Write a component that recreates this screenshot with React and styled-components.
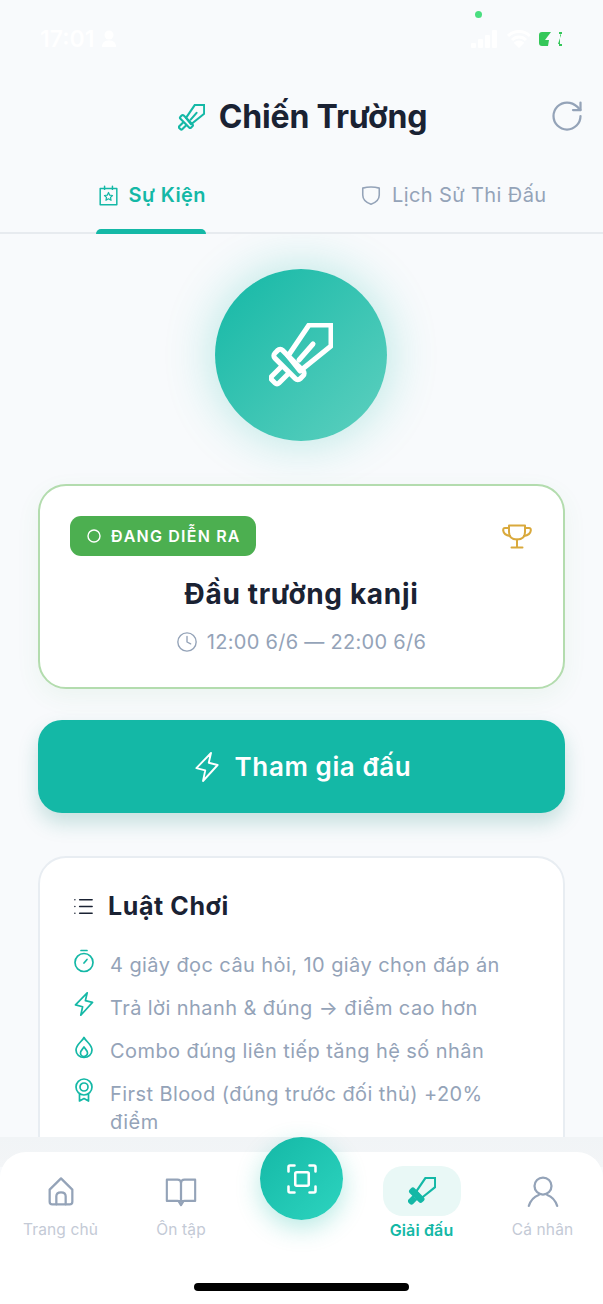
import React from "react";
import styled, { createGlobalStyle } from "styled-components";
import { Clock, List, RotateCw } from "lucide-react";

const Global = createGlobalStyle`
  html, body { margin: 0; padding: 0; background: #f8fafc; }
  * { box-sizing: border-box; }
  body { font-family: Inter, "Noto Sans", sans-serif; }
`;

const Phone = styled.div`
  width: 603px; height: 1304px; display: flex; flex-direction: column;
  background: #f8fafc; overflow: hidden; position: relative;
`;
const StatusBar = styled.div`
  height: 76px; flex: none; display: flex; justify-content: space-between;
  align-items: flex-end; padding: 0 40px 24px 40px; position: relative; color: #fff;
`;
const StatusTime = styled.div`
  display: flex; align-items: center; gap: 7px; font-size: 23px; font-weight: 600; line-height: 26px;
`;
const StatusIcons = styled.div` display: flex; align-items: center; gap: 8px; height: 26px; `;
const CameraDot = styled.span`
  position: absolute; top: 11px; left: 475px; width: 7px; height: 7px;
  border-radius: 50%; background: #4ade80;
`;
const Header = styled.header`
  height: 82px; flex: none; display: flex; align-items: center; justify-content: center;
  gap: 14px; position: relative; padding: 0 0 0 2px;
`;
const HeaderMark = styled.span` display: flex; color: #14b8a6; `;
const Title = styled.h1`
  margin: 0; font-size: 32px; line-height: 40px; font-weight: 700; color: #1a2233; letter-spacing: -0.15px;
`;
const Refresh = styled.span`
  position: absolute; right: 18px; top: 22px; display: flex; color: #94a3b8;
`;
const Tabs = styled.nav`
  flex: none; height: 76px; display: flex; border-bottom: 2px solid #e7ebef;
`;
const TabCell = styled.div` flex: 1; display: flex; justify-content: center; `;
const Tab = styled.div`
  display: flex; align-items: center; gap: 10px; height: 76px; padding: 0 0 2px 2px; position: relative;
  color: ${p => (p.$active ? "#14b8a6" : "#94a3b8")};
  font-size: 20px; font-weight: ${p => (p.$active ? 600 : 400)};
  letter-spacing: 0.4px; margin-bottom: -2px;
  ${p => p.$active && `
    &::after { content: ""; position: absolute; left: 0; right: 0; bottom: 0; height: 5px;
      background: #14b8a6; border-radius: 5px 5px 0 0; }
  `}
`;
const Content = styled.main`
  flex: none; height: 904px; overflow: hidden; padding: 35px 38px 0 38px;
  display: flex; flex-direction: column; align-items: stretch;
`;
const Hero = styled.div`
  width: 172px; height: 172px; border-radius: 50%; align-self: center; flex: none;
  margin-left: -1px; display: flex; align-items: center; justify-content: center;
  color: #fff;
  background: linear-gradient(135deg, #14b8a6, #5ed0bf);
  box-shadow: 0 0 50px rgba(20, 184, 166, 0.3);
`;
const EventCard = styled.section`
  margin-top: 43px; height: 205px; flex: none; background: #fff; border: 2px solid #b3dcae;
  border-radius: 28px; padding: 30px 31px 0 30px; position: relative;
  box-shadow: 0 8px 24px rgba(76, 175, 80, 0.07);
  display: flex; flex-direction: column; align-items: center;
`;
const CardTop = styled.div` align-self: stretch; display: flex; justify-content: space-between; align-items: center; `;
const Badge = styled.div`
  height: 40px; width: 186px; background: #4caf50; border-radius: 11px; color: #fff;
  display: flex; align-items: center; gap: 10px; padding-left: 17px;
  font-size: 16px; font-weight: 600; letter-spacing: 1.2px;
`;
const EventTitle = styled.h2`
  margin: 19px 0 0; font-size: 28px; line-height: 38px; font-weight: 700; color: #1a2233; letter-spacing: 0.67px;
  padding-left: 1px;
`;
const EventTime = styled.div`
  margin-top: 15px; display: flex; align-items: center; gap: 9px; color: #94a3b8;
  font-size: 20px; line-height: 28px; letter-spacing: 0.3px;
`;
const JoinButton = styled.button`
  margin-top: 31px; height: 93px; flex: none; border: 0; border-radius: 24px; background: #14b8a6; color: #fff;
  display: flex; align-items: center; justify-content: center; gap: 13px;
  font: 600 26px Inter, sans-serif; letter-spacing: 0.6px;
  box-shadow: 0 10px 20px rgba(20, 130, 120, 0.22);
`;
const RulesCard = styled.section`
  margin-top: 43px; flex: none; background: #fff; border: 2px solid #e8edf2; border-radius: 28px;
  padding: 32px 32px 40px 32px;
`;
const RulesHead = styled.div` display: flex; align-items: center; gap: 13px; color: #1a2233; `;
const RulesTitle = styled.h3`
  margin: 0; font-size: 25px; line-height: 32px; font-weight: 700; letter-spacing: 0.6px;
`;
const RuleList = styled.ul` list-style: none; margin: 29px 0 0; padding: 0; display: flex; flex-direction: column; gap: 15px; `;
const Rule = styled.li`
  display: flex; gap: 14px; align-items: flex-start; color: #94a3b8;
  font-size: 20px; line-height: 28px; letter-spacing: 0.42px;
`;
const RuleIcon = styled.span`
  width: 24px; height: 28px; margin-top: -2px; flex: none; color: #14b8a6;
  display: flex; align-items: flex-start; justify-content: center;
`;
const Fade = styled.div`
  position: absolute; left: 0; right: 0; top: 1137px; height: 30px; background: linear-gradient(#f1f4f6, #f3f5f7);
`;
const BottomNav = styled.nav`
  position: absolute; left: 0; right: 0; bottom: 0; height: 152px; background: #fff;
  border-radius: 26px 26px 0 0; display: grid; grid-template-columns: 121px 120px 120px 121px 121px;
  padding-top: 14px;
`;
const NavItem = styled.div`
  display: flex; flex-direction: column; align-items: center; height: 80px;
  color: ${p => (p.$active ? "#14b8a6" : "#c4cad6")};
  font-size: ${p => (p.$active ? 16 : 15.5)}px; font-weight: ${p => (p.$active ? 600 : 400)}; letter-spacing: 0.15px;
`;
const NavIcon = styled.span`
  width: 78px; height: 50px; border-radius: 20px; display: flex; align-items: center; justify-content: center;
  color: ${p => (p.$active ? "#14b8a6" : "#94a3b8")};
  background: ${p => (p.$active ? "#e9f8f6" : "transparent")};
`;
const NavLabel = styled.span` margin-top: 3px; line-height: 22px; `;
const Fab = styled.div`
  position: absolute; left: 260px; top: -15px; width: 83px; height: 83px; border-radius: 50%; color: #fff;
  background: linear-gradient(135deg, #14b8a6, #2dd4bf); display: flex; align-items: center; justify-content: center;
  box-shadow: 0 8px 24px rgba(20, 184, 166, 0.3);
`;
const HomeBar = styled.div`
  position: absolute; left: 194px; bottom: 13px; width: 215px; height: 8px; border-radius: 4px; background: #000;
`;

const SwordIcon = ({ size = 64, sw = 5, solidGuard = false }) => (
  <svg width={size} height={size} viewBox="0 0 64 64" fill="none" stroke="currentColor" strokeWidth={sw} strokeLinejoin="round" strokeLinecap="round">
    <path d="M40 2H62V23L31 48L19 33Z" />
    {!solidGuard && <path d="M30 37L44 21" />}
    <rect x="2" y="36" width="36" height="11" rx="3.5" transform="rotate(45 20 41.5)" fill={solidGuard ? "currentColor" : "none"} />
    <path d="M12 44L3 53Q1 55 3 57L6 60Q8 62 10 60L19 51" fill={solidGuard ? "currentColor" : "none"} />
  </svg>
);

const Svg = ({ size = 24, sw = 2, children, ...rest }) => (
  <svg width={size} height={size} viewBox="0 0 24 24" fill="none" stroke="currentColor" strokeWidth={sw} strokeLinecap="round" strokeLinejoin="round" {...rest}>
    {children}
  </svg>
);
const Bolt = ({ size = 24, sw = 1.7 }) => (
  <Svg size={size} sw={sw}><path d="M15.2 0.8L3.5 12.9L10.6 14.7L8.8 23.2L20.5 10.4L13.4 8.6L15.2 0.8Z" /></Svg>
);
const TimerIcon = () => (
  <Svg size={24} sw={1.7}>
    <circle cx="12" cy="13.5" r="9" /><path d="M9 1.5H15" /><path d="M12 14L15 10.5" />
  </Svg>
);
const Flame = () => (
  <Svg size={24} sw={1.7}>
    <path d="M12 2.5C14 6.5 20 9.5 20 15A8 7.5 0 0 1 4 15C4 9.5 10 6.5 12 2.5Z" />
    <path d="M12 12C13.2 14 15.5 15.5 15.5 18A3.5 3.5 0 0 1 8.5 18C8.5 15.5 10.8 14 12 12Z" />
  </Svg>
);
const AwardIcon = () => (
  <Svg size={24} sw={1.7}>
    <circle cx="12" cy="9" r="8" /><circle cx="12" cy="9" r="4" />
    <path d="M7.5 16V23L12 20.5L16.5 23V16" />
  </Svg>
);
const TrophyIcon = () => (
  <svg width="30" height="25" viewBox="0 0 30 25" fill="none" stroke="#d9a93c" strokeWidth="2" strokeLinecap="round" strokeLinejoin="round">
    <path d="M7 1.5H23V8Q23 15.5 15 15.5Q7 15.5 7 8Z" />
    <path d="M7 4H3Q1 4 1.2 6.5Q1.8 11 8 12" /><path d="M23 4H27Q29 4 28.8 6.5Q28.2 11 22 12" />
    <path d="M15 15.5V23" /><path d="M9.5 23.5H20.5" />
  </svg>
);
const ShieldIcon = () => (
  <Svg size={22} sw={1.7}>
    <path d="M3 4.5Q12 2 21 4.5V12Q21 19 12 22Q3 19 3 12Z" />
  </Svg>
);
const CalendarStar = () => (
  <Svg size={21} sw={1.7}>
    <path d="M2.5 4H21.5V22.5H2.5Z" /><path d="M7.5 1.5V5M16.5 1.5V5" />
    <path d="M12 8.5L13.4 11.6L16.6 12L14.3 14.2L14.9 17.5L12 15.8L9.1 17.5L9.7 14.2L7.4 12L10.6 11.6Z" strokeWidth="1.4" />
  </Svg>
);
const ScanIcon = () => (
  <Svg size={36} sw={1.7}>
    <path d="M3 7V4Q3 3 4 3H7M17 3H20Q21 3 21 4V7M21 17V20Q21 21 20 21H17M7 21H4Q3 21 3 20V17" />
    <rect x="7.5" y="7.5" width="9" height="9" rx="1" />
  </Svg>
);
const HomeIcon = () => (
  <Svg size={32} sw={1.7}>
    <path d="M12 2.5L3.5 11V20Q3.5 22 5.5 22H18.5Q20.5 22 20.5 20V11L12 2.5Z" />
    <path d="M8.5 22V16Q8.5 13 12 13Q15.5 13 15.5 16V22" />
  </Svg>
);
const BookIcon = () => (
  <Svg size={34} sw={1.5}>
    <path d="M2 4H9.5Q12 4 12 6.5V19.5Q12 19 9.5 19H2Z" />
    <path d="M22 4H14.5Q12 4 12 6.5V19.5Q12 19 14.5 19H22Z" />
    <path d="M10.5 19.5L12 22L13.5 19.5" />
  </Svg>
);
const UserIcon = () => (
  <Svg size={34} sw={1.6}>
    <circle cx="12" cy="8.5" r="6" />
    <path d="M2 22.5C3.5 18 7 15.5 9 14.8M22 22.5C20.5 18 17 15.5 15 14.8" />
  </Svg>
);
const PersonGlyph = () => (
  <svg width="16" height="18" viewBox="0 0 16 18" fill="#fff"><circle cx="8" cy="5" r="4.5" /><path d="M1 17C1 12 4 10.5 8 10.5S15 12 15 17Z" /></svg>
);
const Signal = () => (
  <svg width="28" height="18" viewBox="0 0 28 18" fill="#fff"><rect x="0" y="13" width="5" height="5" rx="1" /><rect x="7" y="9" width="5" height="9" rx="1" /><rect x="14" y="5" width="5" height="13" rx="1" /><rect x="21" y="0" width="5" height="18" rx="1" /></svg>
);
const Wifi = () => (
  <svg width="24" height="18" viewBox="0 0 24 18" fill="none" stroke="#fff" strokeWidth="3"><path d="M1 6C7 0 17 0 23 6" /><path d="M5 10C9 6 15 6 19 10" /><path d="M12 16L9 13Q12 11 15 13Z" fill="#fff" /></svg>
);
const Battery = () => (
  <svg width="24" height="14" viewBox="0 0 24 14">
    <path d="M3 0H12L6 8H10L9 14H3Q0 14 0 11V3Q0 0 3 0Z" fill="#34c759" />
    <path d="M21 2V12H19L22 3Z" fill="#34c759" />
    <path d="M20 0H23V2H20ZM20 12H23V14H20Z" fill="#34c759" />
  </svg>
);

export default function App() {
  return (
    <Phone>
      <Global />
      <StatusBar>
        <CameraDot />
        <StatusTime>17:01 <PersonGlyph /></StatusTime>
        <StatusIcons><Signal /><Wifi /><Battery /></StatusIcons>
      </StatusBar>
      <Header>
        <HeaderMark><SwordIcon size={27} sw={5} /></HeaderMark>
        <Title>Chiến Trường</Title>
        <Refresh><RotateCw size={36} strokeWidth={1.5} /></Refresh>
      </Header>
      <Tabs>
        <TabCell>
          <Tab $active><CalendarStar />Sự Kiện</Tab>
        </TabCell>
        <TabCell>
          <Tab><ShieldIcon />Lịch Sử Thi Đấu</Tab>
        </TabCell>
      </Tabs>
      <Content>
        <Hero><SwordIcon /></Hero>
        <EventCard>
          <CardTop>
            <Badge>
              <svg width="14" height="14" viewBox="0 0 14 14" fill="none" stroke="#fff" strokeWidth="1.4"><circle cx="7" cy="7" r="6" /></svg>
              ĐANG DIỄN RA
            </Badge>
            <TrophyIcon />
          </CardTop>
          <EventTitle>Đầu trường kanji</EventTitle>
          <EventTime><Clock size={22} strokeWidth={1.5} />12:00 6/6 — 22:00 6/6</EventTime>
        </EventCard>
        <JoinButton><Bolt size={30} sw={1.5} />Tham gia đấu</JoinButton>
        <RulesCard>
          <RulesHead><List size={23} strokeWidth={1.6} /><RulesTitle>Luật Chơi</RulesTitle></RulesHead>
          <RuleList>
            <Rule><RuleIcon><TimerIcon /></RuleIcon>4 giây đọc câu hỏi, 10 giây chọn đáp án</Rule>
            <Rule><RuleIcon><Bolt /></RuleIcon>Trả lời nhanh &amp; đúng → điểm cao hơn</Rule>
            <Rule><RuleIcon><Flame /></RuleIcon>Combo đúng liên tiếp tăng hệ số nhân</Rule>
            <Rule><RuleIcon><AwardIcon /></RuleIcon>First Blood (đúng trước đối thủ) +20% điểm</Rule>
          </RuleList>
        </RulesCard>
      </Content>
      <Fade />
      <BottomNav>
        <NavItem><NavIcon><HomeIcon /></NavIcon><NavLabel>Trang chủ</NavLabel></NavItem>
        <NavItem><NavIcon><BookIcon /></NavIcon><NavLabel>Ôn tập</NavLabel></NavItem>
        <div />
        <NavItem $active><NavIcon $active><SwordIcon size={28} sw={5} solidGuard /></NavIcon><NavLabel>Giải đấu</NavLabel></NavItem>
        <NavItem><NavIcon><UserIcon /></NavIcon><NavLabel>Cá nhân</NavLabel></NavItem>
        <Fab><ScanIcon /></Fab>
      </BottomNav>
      <HomeBar />
    </Phone>
  );
}
